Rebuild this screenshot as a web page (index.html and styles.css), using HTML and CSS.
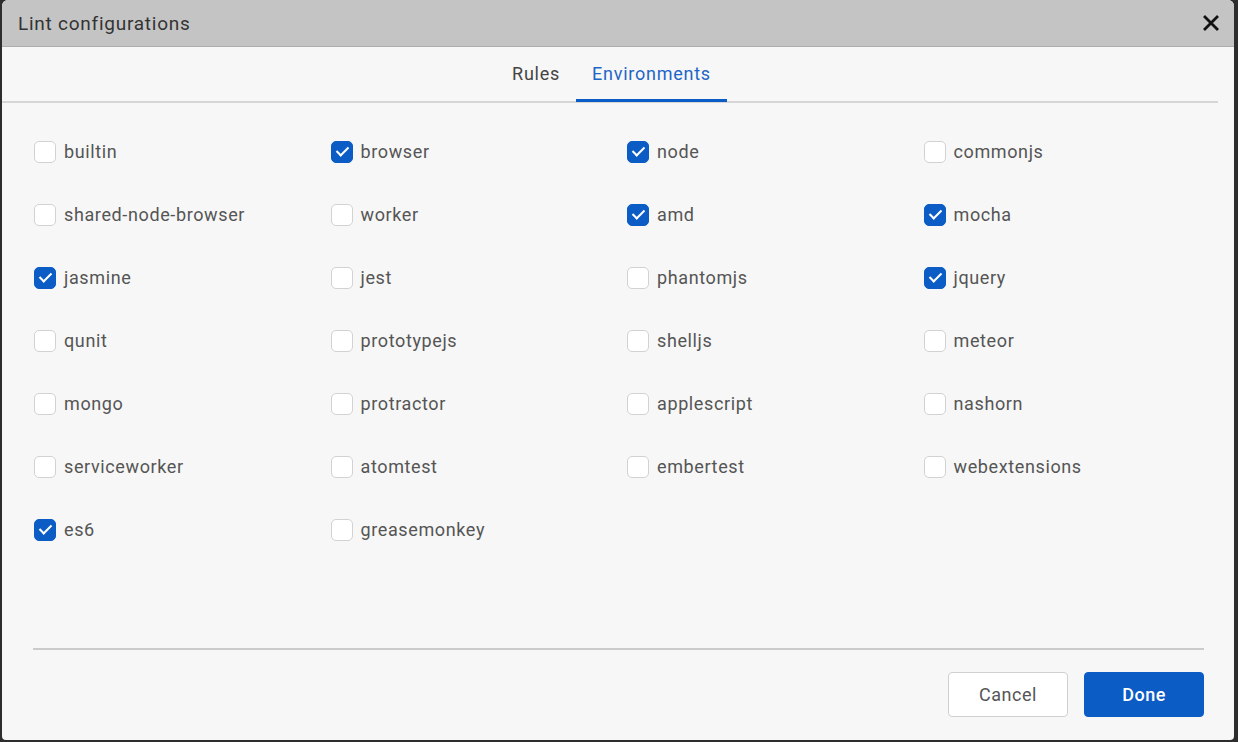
FILE: index.html
```html
<!DOCTYPE html>
<html>
<head>
<meta charset="utf-8">
<link rel="stylesheet" href="styles.css">
</head>
<body>
<div class="dialog">
  <div class="header">
    <span class="title">Lint configurations</span>
    <svg class="close" width="16" height="16" viewBox="0 0 16 16"><path d="M2 2 L14 14 M14 2 L2 14" stroke="#111" stroke-width="2.8" stroke-linecap="square"/></svg>
  </div>
  <div class="tabs">
    <div class="tab">Rules</div>
    <div class="tab active">Environments</div>
  </div>
  <div class="grid">
    <label class="item"><span class="box"></span>builtin</label>
    <label class="item"><span class="box on"></span>browser</label>
    <label class="item"><span class="box on"></span>node</label>
    <label class="item"><span class="box"></span>commonjs</label>
    <label class="item"><span class="box"></span>shared-node-browser</label>
    <label class="item"><span class="box"></span>worker</label>
    <label class="item"><span class="box on"></span>amd</label>
    <label class="item"><span class="box on"></span>mocha</label>
    <label class="item"><span class="box on"></span>jasmine</label>
    <label class="item"><span class="box"></span>jest</label>
    <label class="item"><span class="box"></span>phantomjs</label>
    <label class="item"><span class="box on"></span>jquery</label>
    <label class="item"><span class="box"></span>qunit</label>
    <label class="item"><span class="box"></span>prototypejs</label>
    <label class="item"><span class="box"></span>shelljs</label>
    <label class="item"><span class="box"></span>meteor</label>
    <label class="item"><span class="box"></span>mongo</label>
    <label class="item"><span class="box"></span>protractor</label>
    <label class="item"><span class="box"></span>applescript</label>
    <label class="item"><span class="box"></span>nashorn</label>
    <label class="item"><span class="box"></span>serviceworker</label>
    <label class="item"><span class="box"></span>atomtest</label>
    <label class="item"><span class="box"></span>embertest</label>
    <label class="item"><span class="box"></span>webextensions</label>
    <label class="item"><span class="box on"></span>es6</label>
    <label class="item"><span class="box"></span>greasemonkey</label>
  </div>
  <div class="footer">
    <button class="btn cancel">Cancel</button>
    <button class="btn done">Done</button>
  </div>
</div>
</body>
</html>
```
FILE: styles.css
```css
html, body {
  margin: 0;
  padding: 0;
  background: #2d2d2d;
  font-family: Roboto, "Liberation Sans", sans-serif;
}
.dialog {
  margin-left: 2px;
  width: 1232px;
  height: 740px;
  background: #f7f7f7;
  border-radius: 6px 6px 4px 4px;
  overflow: hidden;
  display: flex;
  flex-direction: column;
}
.header {
  height: 46px;
  background: #c4c4c4;
  border-bottom: 1px solid #adadad;
  display: flex;
  align-items: center;
  justify-content: space-between;
  padding: 0 15px 0 16px;
  flex: none;
}
.title {
  font-size: 19px;
  color: #333;
  letter-spacing: 0.75px;
}
.tabs {
  display: flex;
  justify-content: center;
  margin-right: 16px;
  padding-left: 3px;
  height: 54px;
  border-bottom: 2px solid #d6d6d6;
  flex: none;
}
.tab {
  padding: 0 16px;
  font-size: 18px;
  color: #444;
  display: flex;
  align-items: center;
  border-bottom: 3px solid transparent;
  margin-bottom: -1px;
  letter-spacing: 0.75px;
}
.tab.active {
  color: #1e66c6;
  border-bottom-color: #0b5cc5;
}
.grid {
  display: grid;
  grid-template-columns: repeat(4, 1fr);
  grid-auto-rows: 63px;
  padding: 17px 14px 0 32px;
  flex: 1;
  align-content: start;
}
.item {
  display: flex;
  align-items: center;
  gap: 8px;
  font-size: 18px;
  color: #555;
  letter-spacing: 0.62px;
}
.box {
  width: 20px;
  height: 20px;
  border: 1px solid #d2d2d2;
  border-radius: 5px;
  background: #fff;
  flex: none;
  position: relative;
}
.box.on {
  background: #0b5cc5;
  border-color: #0b5cc5;
}
.box.on::after {
  content: "";
  position: absolute;
  left: 7px;
  top: 2px;
  width: 5px;
  height: 10px;
  border: solid #fff;
  border-width: 0 2px 2px 0;
  transform: rotate(45deg);
}
.footer {
  margin: 0 30px 0 31px;
  border-top: 2px solid #cbcbcb;
  padding: 22px 0 23px;
  display: flex;
  justify-content: flex-end;
  gap: 16px;
  flex: none;
}
.btn {
  width: 120px;
  height: 45px;
  border-radius: 4px;
  font-family: Roboto, "Liberation Sans", sans-serif;
  font-size: 18px;
  letter-spacing: 0.5px;
  cursor: pointer;
}
.cancel {
  background: #fff;
  border: 1px solid #d0d0d0;
  color: #555;
}
.done {
  background: #0b5cc5;
  border: 1px solid #0b5cc5;
  color: #fff;
  font-weight: 500;
}
```
